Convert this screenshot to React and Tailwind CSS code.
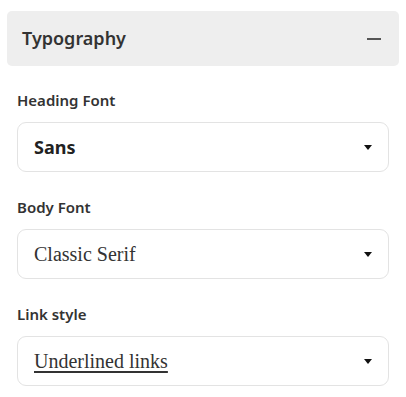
export default function App() {
  const fields = [
    { label: 'Heading Font', value: 'Sans', kind: 'sans' },
    { label: 'Body Font', value: 'Classic Serif', kind: 'serif' },
    { label: 'Link style', value: 'Underlined links', kind: 'link' },
  ]

  return (
    <div className="w-[406px] h-[397px] bg-white pt-[11px] px-[7px] font-['Noto_Sans','Open_Sans',sans-serif] text-[#333333]">
      <div className="flex items-center justify-between h-[55px] bg-[#eeeeee] rounded-[5px] pl-[15px] pr-[18px]">
        <span className="text-[18px] font-semibold text-[#333333] leading-none -mt-[2px]">Typography</span>
        <span className="block w-[14px] h-[2px] bg-[#555555]" />
      </div>

      <div className="px-[10px] pt-[24px] flex flex-col gap-[25px]">
        {fields.map(f => (
          <div key={f.label} className="flex flex-col">
            <label className="text-[15px] font-semibold text-[#333333] leading-[20px] mb-[12px]">
              {f.label}
            </label>
            <div className="flex items-center justify-between h-[50px] border border-[#e3e3e3] rounded-[9px] pl-[16px] pr-[15px]">
              {f.kind === 'sans' && (
                <span className="text-[18px] font-bold text-[#222222]">{f.value}</span>
              )}
              {f.kind === 'serif' && (
                <span className="text-[20px] text-[#333333] font-['Liberation_Serif',serif]">{f.value}</span>
              )}
              {f.kind === 'link' && (
                <span className="text-[20px] text-[#333333] underline underline-offset-[3px] font-['Liberation_Serif',serif]">{f.value}</span>
              )}
              <svg width="8" height="5" viewBox="0 0 8 5" className="mr-[1px]">
                <path d="M0 0h8L4 5z" fill="#111111" />
              </svg>
            </div>
          </div>
        ))}
      </div>
    </div>
  )
}
